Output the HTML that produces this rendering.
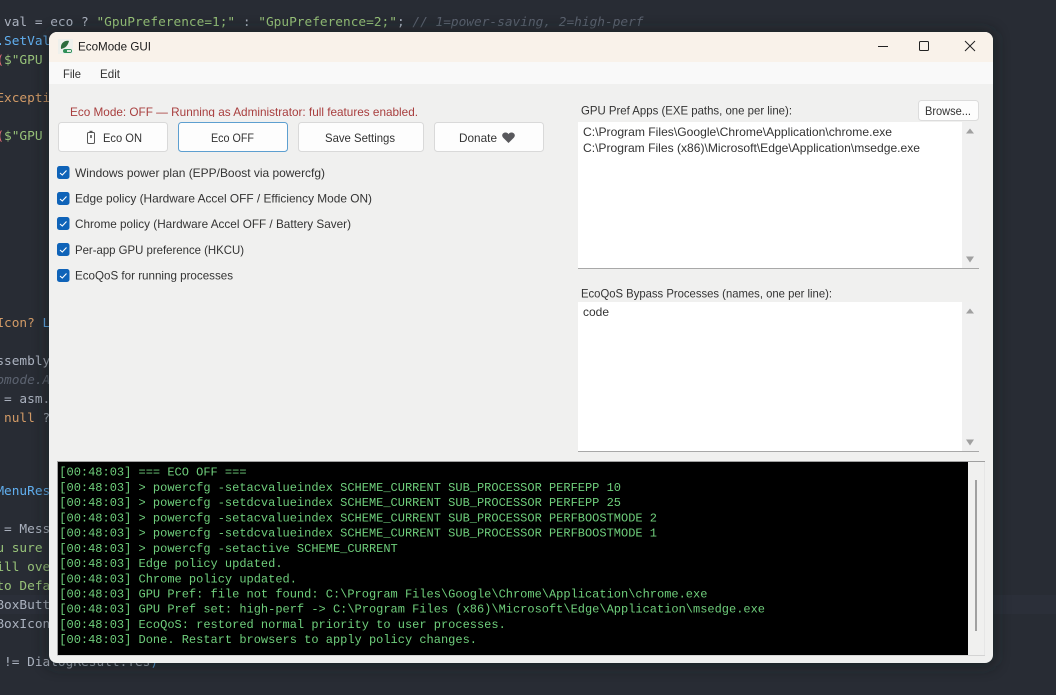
<!DOCTYPE html>
<html><head><meta charset="utf-8"><title>EcoMode GUI</title>
<style>
html,body{margin:0;padding:0;background:#282c34;width:1056px;height:695px;overflow:hidden}
svg{display:block}
.c{font-family:"DejaVu Sans Mono","Liberation Mono",monospace;font-size:12.8px}
.u{font-family:"Liberation Sans",sans-serif;font-size:12px;fill:#333}
.l{font-family:"Liberation Mono",monospace;font-size:12px;fill:#6fcf7c}
</style></head><body>
<svg width="1056" height="695" viewBox="0 0 1056 695" xmlns="http://www.w3.org/2000/svg">
<defs><filter id="b" x="-10%" y="-10%" width="120%" height="120%"><feGaussianBlur stdDeviation="7"/></filter>
<clipPath id="ec"><rect x="60" y="100" width="400" height="17"/></clipPath></defs>
<rect width="1056" height="695" fill="#282c34"/>
<rect x="0" y="595" width="1056" height="19" fill="#2b2f39"/>

<g class="c" fill="#abb2bf">
<text x="4" y="26"><tspan fill="#abb2bf">val = eco ? </tspan><tspan fill="#98c379">"GpuPreference=1;"</tspan><tspan> : </tspan><tspan fill="#98c379">"GpuPreference=2;"</tspan><tspan>; </tspan><tspan fill="#5c6370" font-style="italic">// 1=power-saving, 2=high-perf</tspan></text>
<text x="-3.700" y="45"><tspan fill="#61afef">.SetVal</tspan></text>
<text x="-3.700" y="64"><tspan fill="#e06c75">(</tspan><tspan fill="#98c379">$"GPU</tspan></text>
<text x="-3.700" y="102" fill="#d19a66">Excepti</text>
<text x="-3.700" y="140"><tspan fill="#e06c75">(</tspan><tspan fill="#98c379">$"GPU</tspan></text>
<text x="-3.700" y="327" fill="#d19a66">Icon? <tspan fill="#61afef">L</tspan></text>
<text x="-3.700" y="365">ssembly</text>
<text x="-3.700" y="384" fill="#5c6370" font-style="italic">omode.A</text>
<text x="4" y="403">= asm.</text>
<text x="4" y="422" fill="#d19a66">null <tspan fill="#abb2bf">?</tspan></text>
<text x="-3.700" y="495" fill="#61afef">MenuRes</text>
<text x="4" y="533">= Mess</text>
<text x="-3.700" y="552" fill="#98c379">u sure</text>
<text x="-3.700" y="571" fill="#98c379">ill ove</text>
<text x="-3.700" y="590" fill="#98c379">to Defa</text>
<text x="-3.700" y="609">BoxButt</text>
<text x="-3.700" y="628">BoxIcon</text>
<text x="4" y="666">!= DialogResult.Yes<tspan fill="#61afef">)</tspan></text>
</g>

<rect x="46" y="30" width="950" height="637" rx="10" fill="#181a1f" opacity=".55" filter="url(#b)"/>
<rect x="49" y="32" width="944" height="631" rx="8" fill="#f0f0ef"/>
<path d="M49 62V40a8 8 0 0 1 8-8H985a8 8 0 0 1 8 8V62Z" fill="#f9f2ea"/>
<rect x="49" y="62" width="944" height="22" fill="#f9f9f9"/>

<rect x="58" y="39" width="15" height="15" fill="#eef0ec"/>
<path d="M61 49C60 43 65 40 69 41C68 45 66 48 61 49Z" fill="#2d6b3c"/>
<rect x="63" y="49" width="9" height="4" rx="2" fill="#2f8f57"/>
<rect x="67" y="50" width="4" height="2" fill="#dfe8df"/>
<text class="u" x="78" y="50.5" textLength="73" lengthAdjust="spacingAndGlyphs" style="fill:#1a1a1a">EcoMode GUI</text>
<path d="M878 46.5H888" stroke="#222" stroke-width="1"/>
<rect x="919.5" y="41.5" width="9" height="9" rx="1" fill="none" stroke="#222" stroke-width="1"/>
<path d="M965 41L975 51M975 41L965 51" stroke="#222" stroke-width="1"/>

<text class="u" x="63" y="78" textLength="18" lengthAdjust="spacingAndGlyphs">File</text>
<text class="u" x="100" y="78" textLength="20" lengthAdjust="spacingAndGlyphs">Edit</text>

<g clip-path="url(#ec)"><text class="u" x="70" y="116" textLength="348" lengthAdjust="spacingAndGlyphs" style="fill:#a83e3e">Eco Mode: OFF — Running as Administrator: full features enabled.</text></g>

<g fill="#fdfdfd" stroke="#d9d9d9">
<rect x="58.5" y="122.5" width="109" height="29" rx="3"/>
<rect x="298.5" y="122.5" width="125" height="29" rx="3"/>
<rect x="434.5" y="122.5" width="109" height="29" rx="3"/>
</g>
<rect x="178.5" y="122.5" width="109" height="29" rx="3" fill="#fdfdfd" stroke="#5d9fd0"/>
<rect x="87.5" y="132.5" width="7" height="11" rx="1.2" fill="none" stroke="#555" stroke-width="1"/>
<rect x="89.5" y="130.8" width="3" height="1.6" fill="#555"/>
<rect x="90" y="135" width="2" height="3" fill="#777"/>
<text class="u" x="103" y="142" textLength="39" lengthAdjust="spacingAndGlyphs">Eco ON</text>
<text class="u" x="211" y="142" textLength="43" lengthAdjust="spacingAndGlyphs">Eco OFF</text>
<text class="u" x="325" y="142" textLength="70" lengthAdjust="spacingAndGlyphs">Save Settings</text>
<text class="u" x="459" y="142" textLength="38" lengthAdjust="spacingAndGlyphs">Donate</text>
<path d="M508.5 143L503 137.5C501 135 503 132.5 505.5 132.5C507 132.5 508 133.2 508.5 134.2C509 133.2 510 132.5 511.5 132.5C514 132.5 516 135 514 137.5Z" fill="#58585c"/>

<g fill="#0f63b8">
<rect x="57" y="166" width="12.5" height="13" rx="2.5"/>
<rect x="57" y="192" width="12.5" height="13" rx="2.5"/>
<rect x="57" y="217" width="12.5" height="13" rx="2.5"/>
<rect x="57" y="243" width="12.5" height="13" rx="2.5"/>
<rect x="57" y="269" width="12.5" height="13" rx="2.5"/>
</g>
<g fill="none" stroke="#fff" stroke-width="1.1">
<path d="M60 173L62.3 175L66.5 170.5"/>
<path d="M60 199L62.3 201L66.5 196.5"/>
<path d="M60 224L62.3 226L66.5 221.5"/>
<path d="M60 250L62.3 252L66.5 247.5"/>
<path d="M60 276L62.3 278L66.5 273.5"/>
</g>
<text class="u" x="75" y="177" textLength="250" lengthAdjust="spacingAndGlyphs">Windows power plan (EPP/Boost via powercfg)</text>
<text class="u" x="75" y="202.500" textLength="297" lengthAdjust="spacingAndGlyphs">Edge policy (Hardware Accel OFF / Efficiency Mode ON)</text>
<text class="u" x="75" y="228" textLength="276" lengthAdjust="spacingAndGlyphs">Chrome policy (Hardware Accel OFF / Battery Saver)</text>
<text class="u" x="75" y="254" textLength="169" lengthAdjust="spacingAndGlyphs">Per-app GPU preference (HKCU)</text>
<text class="u" x="75" y="279.500" textLength="158" lengthAdjust="spacingAndGlyphs">EcoQoS for running processes</text>

<text class="u" x="581" y="114.500" textLength="211" lengthAdjust="spacingAndGlyphs">GPU Pref Apps (EXE paths, one per line):</text>
<rect x="918.500" y="100.500" width="60" height="20" rx="3" fill="#fdfdfd" stroke="#dcdcdc"/>
<text class="u" x="925" y="115" textLength="46" lengthAdjust="spacingAndGlyphs">Browse...</text>

<rect x="578" y="122" width="401" height="146" fill="#fff"/>
<rect x="962" y="122" width="17" height="146" fill="#f0f0f0"/>
<rect x="578" y="268" width="401" height="1" fill="#a8a8a8"/>
<path d="M966 133.500L970 128.500L974 133.500Z M966 256.500H974L970 262.500Z" fill="#a0a0a0"/>
<text class="u" x="583" y="136" textLength="309" lengthAdjust="spacingAndGlyphs">C:\Program Files\Google\Chrome\Application\chrome.exe</text>
<text class="u" x="583" y="152" textLength="337" lengthAdjust="spacingAndGlyphs">C:\Program Files (x86)\Microsoft\Edge\Application\msedge.exe</text>

<text class="u" x="581" y="297.500" textLength="251" lengthAdjust="spacingAndGlyphs">EcoQoS Bypass Processes (names, one per line):</text>
<rect x="578" y="302" width="401" height="149" fill="#fff"/>
<rect x="962" y="302" width="17" height="149" fill="#f0f0f0"/>
<rect x="578" y="451" width="401" height="1" fill="#a8a8a8"/>
<path d="M966 313.500L970 308.500L974 313.500Z M966 439.500H974L970 445.500Z" fill="#a0a0a0"/>
<text class="u" x="583" y="316" textLength="26" lengthAdjust="spacingAndGlyphs">code</text>

<rect x="57" y="461" width="928" height="1" fill="#a0a0a0"/>
<rect x="57" y="461" width="1" height="195" fill="#a0a0a0"/>
<rect x="58" y="462" width="910" height="193" fill="#000"/>
<rect x="57" y="655" width="928" height="1" fill="#d4d4d4"/>
<rect x="984" y="462" width="1" height="193" fill="#e6e6e6"/>
<rect x="975" y="480" width="2" height="151" fill="#a0a0a0"/>

<g class="l">
<text x="59.300" y="475.500">[00:48:03] === ECO OFF ===</text>
<text x="59.300" y="491">[00:48:03] &gt; powercfg -setacvalueindex SCHEME_CURRENT SUB_PROCESSOR PERFEPP 10</text>
<text x="59.300" y="506">[00:48:03] &gt; powercfg -setdcvalueindex SCHEME_CURRENT SUB_PROCESSOR PERFEPP 25</text>
<text x="59.300" y="521.500">[00:48:03] &gt; powercfg -setacvalueindex SCHEME_CURRENT SUB_PROCESSOR PERFBOOSTMODE 2</text>
<text x="59.300" y="536.500">[00:48:03] &gt; powercfg -setdcvalueindex SCHEME_CURRENT SUB_PROCESSOR PERFBOOSTMODE 1</text>
<text x="59.300" y="552">[00:48:03] &gt; powercfg -setactive SCHEME_CURRENT</text>
<text x="59.300" y="567">[00:48:03] Edge policy updated.</text>
<text x="59.300" y="582.500">[00:48:03] Chrome policy updated.</text>
<text x="59.300" y="597.500">[00:48:03] GPU Pref: file not found: C:\Program Files\Google\Chrome\Application\chrome.exe</text>
<text x="59.300" y="612.500">[00:48:03] GPU Pref set: high-perf -&gt; C:\Program Files (x86)\Microsoft\Edge\Application\msedge.exe</text>
<text x="59.300" y="628">[00:48:03] EcoQoS: restored normal priority to user processes.</text>
<text x="59.300" y="643">[00:48:03] Done. Restart browsers to apply policy changes.</text>
</g>
</svg>
</body></html>
